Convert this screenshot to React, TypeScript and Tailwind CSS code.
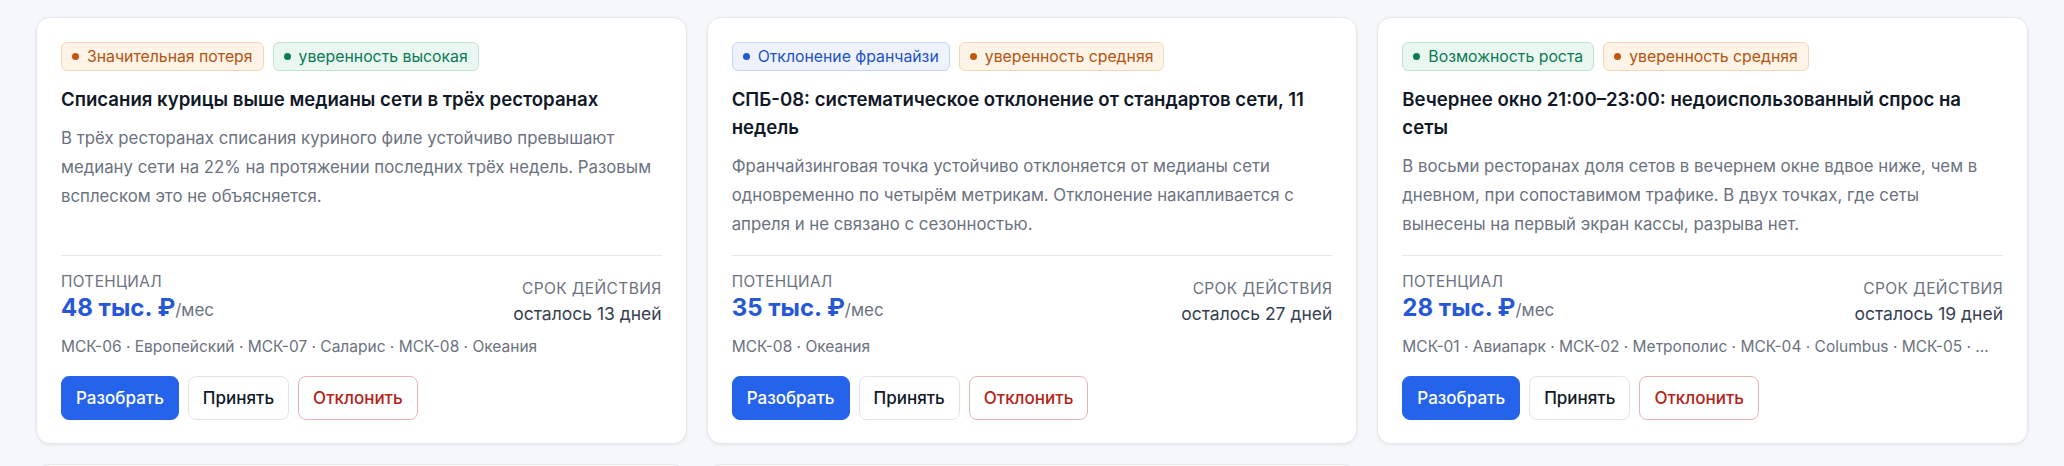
import type { ReactNode } from 'react';

type Tone = 'amber' | 'green' | 'blue';

type Insight = {
  id: string;
  kind: { label: string; tone: Tone };
  confidence: { label: string; tone: Tone };
  title: string;
  summary: string;
  potential: string;
  daysLeft: number;
  stores: string;
};

const toneStyles: Record<Tone, { chip: string; dot: string }> = {
  amber: {
    chip: 'border-[#f3d6b4] bg-[#fdf3e7] text-[#b4530f]',
    dot: 'bg-[#c2560c]',
  },
  green: {
    chip: 'border-[#bfe3d2] bg-[#eaf6f0] text-[#0b7a55]',
    dot: 'bg-[#0b7a55]',
  },
  blue: {
    chip: 'border-[#c5d4f5] bg-[#edf2fd] text-[#2351c9]',
    dot: 'bg-[#2557d6]',
  },
};

const insights: Insight[] = [
  {
    id: 'chicken-waste',
    kind: { label: 'Значительная потеря', tone: 'amber' },
    confidence: { label: 'уверенность высокая', tone: 'green' },
    title: 'Списания курицы выше медианы сети в трёх ресторанах',
    summary:
      'В трёх ресторанах списания куриного филе устойчиво превышают медиану сети на 22% на протяжении последних трёх недель. Разовым всплеском это не объясняется.',
    potential: '48 тыс. ₽',
    daysLeft: 13,
    stores: 'МСК-06 · Европейский · МСК-07 · Саларис · МСК-08 · Океания',
  },
  {
    id: 'spb-08-drift',
    kind: { label: 'Отклонение франчайзи', tone: 'blue' },
    confidence: { label: 'уверенность средняя', tone: 'amber' },
    title: 'СПБ-08: систематическое отклонение от стандартов сети, 11 недель',
    summary:
      'Франчайзинговая точка устойчиво отклоняется от медианы сети одновременно по четырём метрикам. Отклонение накапливается с апреля и не связано с сезонностью.',
    potential: '35 тыс. ₽',
    daysLeft: 27,
    stores: 'МСК-08 · Океания',
  },
  {
    id: 'evening-sets',
    kind: { label: 'Возможность роста', tone: 'green' },
    confidence: { label: 'уверенность средняя', tone: 'amber' },
    title: 'Вечернее окно 21:00–23:00: недоиспользованный спрос на сеты',
    summary:
      'В восьми ресторанах доля сетов в вечернем окне вдвое ниже, чем в дневном, при сопоставимом трафике. В двух точках, где сеты вынесены на первый экран кассы, разрыва нет.',
    potential: '28 тыс. ₽',
    daysLeft: 19,
    stores: 'МСК-01 · Авиапарк · МСК-02 · Метрополис · МСК-04 · Columbus · МСК-05 · ...',
  },
  {
    id: 'delivery-delay',
    kind: { label: 'Значительная потеря', tone: 'amber' },
    confidence: { label: 'уверенность высокая', tone: 'green' },
    title: 'Рост времени доставки в выходные',
    summary: 'Среднее время доставки в субботу и воскресенье выросло на 9 минут.',
    potential: '22 тыс. ₽',
    daysLeft: 21,
    stores: 'МСК-03 · Атриум',
  },
  {
    id: 'coffee-attach',
    kind: { label: 'Возможность роста', tone: 'green' },
    confidence: { label: 'уверенность средняя', tone: 'amber' },
    title: 'Низкая доля кофе в утренних чеках',
    summary: 'В утренние часы кофе добавляют к заказу реже, чем в среднем по сети.',
    potential: '15 тыс. ₽',
    daysLeft: 30,
    stores: 'СПБ-02 · Галерея',
  },
];

function Chip({ tone, children }: { tone: Tone; children: ReactNode }) {
  const s = toneStyles[tone];
  return (
    <span
      className={`inline-flex h-[29px] items-center gap-2 rounded-md border px-2.5 text-[15.8px] leading-5 ${s.chip}`}
    >
      <span className={`h-[7px] w-[7px] rounded-full ${s.dot}`} />
      {children}
    </span>
  );
}

function InsightCard({ insight }: { insight: Insight }) {
  return (
    <article className="flex flex-col rounded-[14px] border border-[#e5e8ee] bg-white px-6 pb-[23px] pt-6 shadow-[0_1px_3px_rgba(16,24,40,0.07)]">
      <div className="flex gap-[9px]">
        <Chip tone={insight.kind.tone}>{insight.kind.label}</Chip>
        <Chip tone={insight.confidence.tone}>{insight.confidence.label}</Chip>
      </div>

      <h3 className="mt-[14px] text-[18.6px] font-semibold leading-7 text-[#111827]">
        {insight.title}
      </h3>
      <p className="mt-[11px] text-[16.8px] leading-[29px] text-pretty text-[#6b7280]">
        {insight.summary}
      </p>

      <div className="mt-auto pt-4">
        <div className="border-t border-[#e5e7eb] pt-4">
          <div className="flex items-end justify-between">
            <div>
              <div className="text-[15.3px] uppercase leading-5 tracking-wide text-[#6b7280]">
                Потенциал
              </div>
              <div className="text-[24px] font-bold leading-8 text-[#2557d6]">
                {insight.potential}
                <span className="text-[17px] font-normal text-[#6b7280]">/мес</span>
              </div>
            </div>
            <div className="text-right">
              <div className="mb-[3px] text-[15.5px] uppercase leading-5 tracking-wide text-[#6b7280]">
                Срок действия
              </div>
              <div className="text-[17.5px] leading-6 text-[#374151]">
                осталось {insight.daysLeft} дней
              </div>
            </div>
          </div>

          <div className="mt-2.5 truncate text-[15.5px] leading-[22px] text-[#6b7280]">
            {insight.stores}
          </div>

          <div className="mt-[18px] flex gap-[9px]">
            <button
              type="button"
              className="rounded-lg border border-[#2563eb] bg-[#2563eb] px-[14px] py-[9px] text-[17px] font-medium leading-6 text-white"
            >
              Разобрать
            </button>
            <button
              type="button"
              className="rounded-lg border border-[#e2e4ec] bg-white px-[14px] py-[9px] text-[17px] font-medium leading-6 text-[#111827]"
            >
              Принять
            </button>
            <button
              type="button"
              className="rounded-lg border border-[#eab3b0] bg-white px-[14px] py-[9px] text-[17px] font-medium leading-6 text-[#b42318]"
            >
              Отклонить
            </button>
          </div>
        </div>
      </div>
    </article>
  );
}

export default function App() {
  return (
    <div className="min-h-screen bg-[#f6f7fa] font-['Inter','Noto_Sans',sans-serif] antialiased">
      <div className="grid grid-cols-3 gap-5 px-9 pb-9 pt-[17px]">
        {insights.map((insight) => (
          <InsightCard key={insight.id} insight={insight} />
        ))}
      </div>
    </div>
  );
}
